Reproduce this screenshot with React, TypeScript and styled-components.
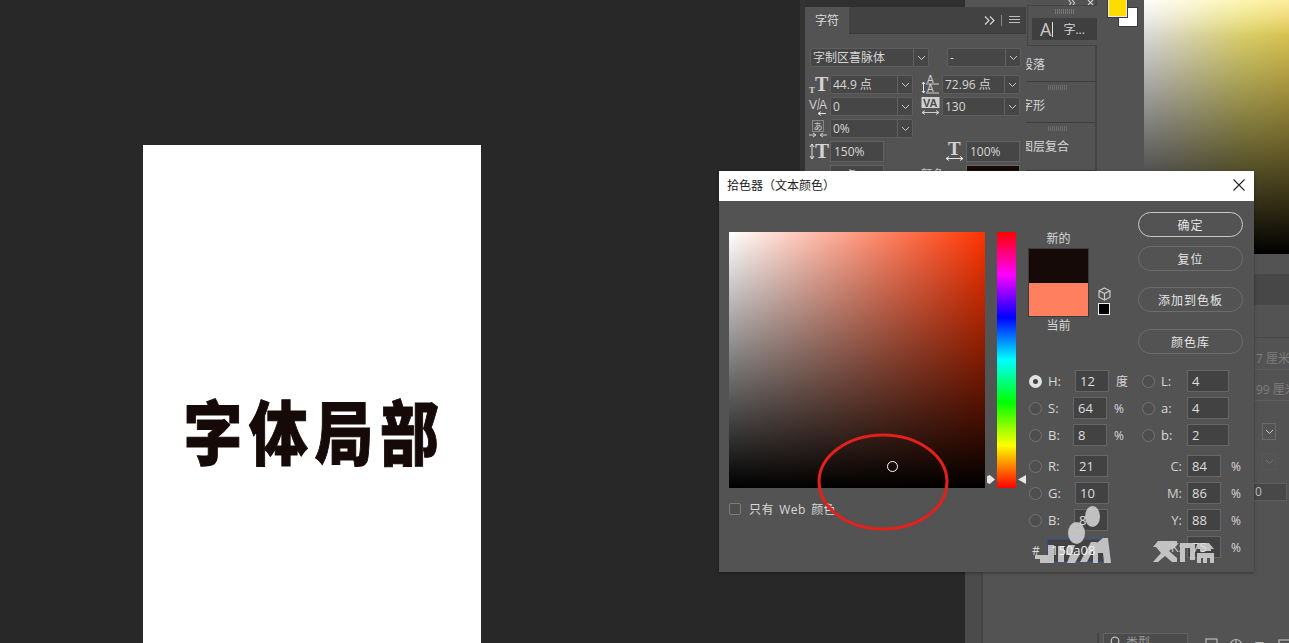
import React from 'react'
import styled, { createGlobalStyle } from 'styled-components'

const UI_FONT = `"Open Sans", "Noto Sans CJK SC", sans-serif`
const PANEL = '#535353'

const GlobalStyle = createGlobalStyle`
    html, body { margin: 0; padding: 0; background: #282828; overflow: hidden; }
    * { box-sizing: border-box; }
    body { font-family: ${UI_FONT}; }
`

const IconSvg = styled.svg`
    overflow: visible;
    flex: none;
`

const Chevron = () => (
    <svg width="9" height="6" viewBox="0 0 9 6" fill="none" stroke="#c8c8c8" strokeWidth="1">
        <path d="M1 1l3.5 3.5L8 1" />
    </svg>
)

const SizeIcon = () => (
    <IconSvg width="19" height="19" viewBox="0 0 19 19" fill="#d4d4d4">
        <text x="6" y="16" fontSize="20" fontWeight="700" fontFamily="Liberation Serif">T</text>
        <text x="0" y="18" fontSize="9" fontWeight="700" fontFamily="Liberation Serif">T</text>
    </IconSvg>
)

const LeadingIcon = () => (
    <IconSvg width="19" height="19" viewBox="0 0 19 19" fill="#cfcfcf">
        <text x="6" y="8" fontSize="10" fontFamily="Liberation Sans">A</text>
        <text x="6" y="17" fontSize="10" fontFamily="Liberation Sans">A</text>
        <path d="M5 9H18M5 18H18" stroke="#cfcfcf" strokeWidth="1" />
        <path d="M2.500 7v11M1 9l1.500-2L4 9M1 16l1.500 2L4 16" stroke="#e2e2e2" strokeWidth="1" fill="none" />
    </IconSvg>
)

const KerningIcon = () => (
    <IconSvg width="19" height="19" viewBox="0 0 19 19" fill="#cfcfcf">
        <text x="0" y="12" fontSize="12" fontFamily="Liberation Sans">V</text>
        <text x="10" y="12" fontSize="12" fontFamily="Liberation Sans">A</text>
        <path d="M8.500 13L10.500 1" stroke="#cfcfcf" strokeWidth="0.800" />
        <path d="M9 16.500h8M9 16.500l3-2M9 16.500l3 2" stroke="#e2e2e2" strokeWidth="1" fill="none" />
    </IconSvg>
)

const TrackingIcon = () => (
    <IconSvg width="19" height="19" viewBox="0 0 19 19">
        <rect x="0.500" y="0" width="18" height="11" fill="#d0d0d0" />
        <text x="2" y="10" fontSize="11" fontWeight="700" fontFamily="Liberation Sans" fill="#4a4a4a">VA</text>
        <path d="M1 15.500h17M1 15.500l3-2M1 15.500l3 2M18 15.500l-3-2M18 15.500l-3 2" stroke="#cfcfcf" strokeWidth="1" fill="none" />
    </IconSvg>
)

const TsumeIcon = () => (
    <IconSvg width="18" height="18" viewBox="0 0 18 18" fill="#cfcfcf">
        <rect x="3.500" y="0.500" width="11" height="11" fill="none" stroke="#bdbdbd" strokeWidth="1" strokeDasharray="1 1" />
        <text x="4.500" y="9.500" fontSize="9" fontFamily="Noto Sans CJK JP">あ</text>
        <path d="M0 15h7M4 13l3 2-3 2M18 15h-7M14 13l-3 2 3 2" stroke="#cfcfcf" strokeWidth="1" fill="none" />
    </IconSvg>
)

const VerticalScaleIcon = () => (
    <IconSvg width="19" height="17" viewBox="0 0 19 17" fill="#d4d4d4">
        <text x="6" y="15" fontSize="21" fontWeight="700" fontFamily="Liberation Serif">T</text>
        <path d="M3 1v15M1 4l2-3 2 3M1 13l2 3 2-3" stroke="#e2e2e2" strokeWidth="1" fill="none" />
    </IconSvg>
)

const HorizontalScaleIcon = () => (
    <IconSvg width="19" height="19" viewBox="0 0 19 19" fill="#d4d4d4">
        <text x="3" y="13" fontSize="19" fontWeight="700" fontFamily="Liberation Serif">T</text>
        <path d="M1 16.500h17M1 16.500l3-2M1 16.500l3 2M18 16.500l-3-2M18 16.500l-3 2" stroke="#e2e2e2" strokeWidth="1" fill="none" />
    </IconSvg>
)

const CubeIcon = () => (
    <svg width="13" height="14" viewBox="0 0 13 14" fill="none" stroke="#c9c9c9" strokeWidth="1.200">
        <path d="M6.500 1L12 3.800v6.400L6.500 13 1 10.200V3.800zM1 3.800l5.500 2.800L12 3.800M6.500 6.600V13" />
    </svg>
)

const MenuIcon = () => (
    <svg width="11" height="8" viewBox="0 0 11 8" stroke="#bdbdbd" strokeWidth="1">
        <path d="M0 .5h11M0 3.500h11M0 6.500h11" />
    </svg>
)

const ExpandIcon = () => (
    <svg width="11" height="9" viewBox="0 0 11 9" fill="none" stroke="#dcdcdc" strokeWidth="1.100">
        <path d="M1 .5l4 4-4 4M6 .5l4 4-4 4" />
    </svg>
)

const TopDockMarks = () => (
    <svg width="26" height="5" viewBox="0 0 26 5" fill="none" stroke="#cfcfcf" strokeWidth="1.100">
        <path d="M0-1l3 4-3 4M3.500-1l3 4-3 4M20 0l5 5M25 0l-5 5" />
    </svg>
)

const LayerFilterIcons = () => (
    <LayerIconStrip width="90" height="12" viewBox="0 0 90 12" fill="none" stroke="#b9b9b9" strokeWidth="1.200">
        <rect x="1" y="1" width="11" height="12" />
        <circle cx="31" cy="7" r="5.500" />
        <path d="M31 1.500v11" />
        <text x="50" y="12" fontSize="13" fontWeight="700" fontFamily="Liberation Serif" fill="#c4c4c4" stroke="none">T</text>
        <rect x="74" y="2" width="11" height="11" />
    </LayerIconStrip>
)

const Dropdown = ({ value, width }: { value: string, width: number }) => (
    <SelectBox $width={width}>
        <SelectValue>{value}</SelectValue>
        <SelectArrow><Chevron /></SelectArrow>
    </SelectBox>
)

const hsb = [
    { label: 'H:', value: '12', unit: '度', on: true, shift: 2 },
    { label: 'S:', value: '64', unit: '%', on: false, shift: 0 },
    { label: 'B:', value: '8', unit: '%', on: false, shift: 0 },
]
const rgb = [
    { label: 'R:', value: '21', shift: 1 },
    { label: 'G:', value: '10', shift: 2 },
    { label: 'B:', value: '8', shift: 1 },
]
const lab = [['L:', '4'], ['a:', '4'], ['b:', '2']]
const cmyk = [['C:', '84'], ['M:', '86'], ['Y:', '88'], ['K:', '75']]

const ColorDialog = () => (
    <Dialog>
        <TitleBar>
            <TitleText>拾色器（文本颜色）</TitleText>
            <svg width="12" height="12" viewBox="0 0 12 12" stroke="#222" strokeWidth="1.100">
                <path d="M.5.5l11 11M11.500.5l-11 11" />
            </svg>
        </TitleBar>
        <DialogBody>
            <PickerColumn>
                <PickerRow>
                    <ColorField>
                        <FieldCursor />
                    </ColorField>
                    <HueStrip>
                        <HueMarkerLeft />
                        <HueMarkerRight />
                    </HueStrip>
                </PickerRow>
                <WebOnly>
                    <CheckBox />
                    <span>只有 Web 颜色</span>
                </WebOnly>
            </PickerColumn>
            <SettingsColumn>
                <TopControls>
                    <SwatchColumn>
                        <SwatchLabel>新的</SwatchLabel>
                        <SwatchBox>
                            <SwatchPart $color="#150a08" />
                            <SwatchPart $color="#ff7f5f" />
                        </SwatchBox>
                        <SwatchLabel>当前</SwatchLabel>
                    </SwatchColumn>
                    <GamutColumn>
                        <CubeIcon />
                        <WebSwatch />
                    </GamutColumn>
                    <ButtonColumn>
                        <DialogButton $primary>确定</DialogButton>
                        <DialogButton $mt={9}>复位</DialogButton>
                        <DialogButton $mt={16}>添加到色板</DialogButton>
                        <DialogButton $mt={17}>颜色库</DialogButton>
                    </ButtonColumn>
                </TopControls>
                <ValueColumns>
                    <ValueColumn>
                        <ValueGroup>
                            {hsb.map(row => (
                                <ValueRow key={row.label}>
                                    <Radio $on={row.on} />
                                    <ValueLabel>{row.label}</ValueLabel>
                                    <Shifted $shift={row.shift}><NumberInput><OverMark>{row.value}</OverMark></NumberInput></Shifted>
                                    <Unit>{row.unit}</Unit>
                                </ValueRow>
                            ))}
                        </ValueGroup>
                        <ValueGroup>
                            {rgb.map(row => (
                                <ValueRow key={row.label}>
                                    <Radio />
                                    <ValueLabel>{row.label}</ValueLabel>
                                    <Shifted $shift={row.shift}><NumberInput><OverMark>{row.value}</OverMark></NumberInput></Shifted>
                                </ValueRow>
                            ))}
                            <HexRow>
                                <HexMark>#</HexMark>
                                <HexInput><OverMark>150a08</OverMark></HexInput>
                            </HexRow>
                        </ValueGroup>
                    </ValueColumn>
                    <ValueColumn>
                        <ValueGroup>
                            {lab.map(([label, value]) => (
                                <ValueRow key={label}>
                                    <Radio />
                                    <ValueLabel>{label}</ValueLabel>
                                    <LabInput>{value}</LabInput>
                                </ValueRow>
                            ))}
                        </ValueGroup>
                        <ValueGroup>
                            {cmyk.map(([label, value]) => (
                                <ValueRow key={label}>
                                    <CmykLabel><OverMark>{label}</OverMark></CmykLabel>
                                    <NumberInput><OverMark>{value}</OverMark></NumberInput>
                                    <CmykUnit>%</CmykUnit>
                                </ValueRow>
                            ))}
                        </ValueGroup>
                    </ValueColumn>
                </ValueColumns>
            </SettingsColumn>
        </DialogBody>
        <Annotation viewBox="0 0 134 100" fill="none">
            <ellipse cx="67" cy="50" rx="64" ry="47" stroke="#e3201b" strokeWidth="3" />
        </Annotation>
        <Watermark viewBox="0 0 190 70" fill="#d6d6d6">
            <ellipse cx="62.500" cy="11.500" rx="7.500" ry="10.500" />
            <ellipse cx="46.500" cy="28" rx="8.500" ry="11" />
            <path d="M5 50h13v-10h6v18H10v-4H5zM28 41h6v16h-6zM38 40h7l-3 9h8l-5 9h-8l3-8h-4zM50 57l11-20h6l-10 20zM63 41l10-8h5l3 25h-7l-1-10h-5v10h-5z" />
            <path d="M128 36h19v4l-8 6 8 7v4h-5l-7-6-7 6h-5l8-9-5-6h-3zM150 38h15v17h-5v-12h-5v14h-5zM168 38h11l5 6h-3v2h-11v-2h-3zM167 48h17v10h-4v-5h-3v5h-4v-5h-2v5h-4z" />
        </Watermark>
    </Dialog>
)

export default function App() {
    return (
        <>
            <GlobalStyle />
            <Page>
                <Canvas>
                    <Artboard>
                        <Headline>字体局部</Headline>
                    </Artboard>
                </Canvas>
                <Dock>
                    <DockTop>
                        <CharacterColumn>
                            <TopSliver><SliverPart /></TopSliver>
                            <PanelTabs>
                                <PanelTab>字符</PanelTab>
                                <TabTools>
                                    <ExpandIcon />
                                    <TabDivider />
                                    <MenuIcon />
                                </TabTools>
                            </PanelTabs>
                            <CharacterBody>
                                <FontRow>
                                    <Dropdown value="字制区喜脉体" width={119} />
                                    <Dropdown value="-" width={74} />
                                </FontRow>
                                <MetricRow>
                                    <MetricIcon><SizeIcon /></MetricIcon>
                                    <Dropdown value="44.9 点" width={83} />
                                    <MetricIcon $ml={8}><LeadingIcon /></MetricIcon>
                                    <Dropdown value="72.96 点" width={78} />
                                </MetricRow>
                                <MetricRow>
                                    <MetricIcon><KerningIcon /></MetricIcon>
                                    <Dropdown value="0" width={83} />
                                    <MetricIcon $ml={8}><TrackingIcon /></MetricIcon>
                                    <Dropdown value="130" width={78} />
                                </MetricRow>
                                <MetricRow>
                                    <MetricIcon><TsumeIcon /></MetricIcon>
                                    <Dropdown value="0%" width={83} />
                                </MetricRow>
                                <MetricRow>
                                    <MetricIcon><VerticalScaleIcon /></MetricIcon>
                                    <PlainInput>150%</PlainInput>
                                    <MetricIcon $ml={61}><HorizontalScaleIcon /></MetricIcon>
                                    <PlainInput>100%</PlainInput>
                                </MetricRow>
                                <MetricRow>
                                    <MetricIcon />
                                    <PlainInput>0 点</PlainInput>
                                    <ColorLabel>颜色:</ColorLabel>
                                    <TextColorBox />
                                </MetricRow>
                            </CharacterBody>
                        </CharacterColumn>
                        <CollapsedDock>
                            <CollapsedTop>
                                <TopDockMarks />
                            </CollapsedTop>
                            <CollapsedItem $height={35} $pad={9}>段落</CollapsedItem>
                            <CollapsedItem $height={41} $pad={15} $grip>字形</CollapsedItem>
                            <CollapsedItem $height={48} $pad={15} $grip>图层复合</CollapsedItem>
                            <FloatingPanel>
                                <Grip />
                                <FloatingTab>
                                    <FloatingGlyph>A</FloatingGlyph>
                                    <FloatingCaret />
                                    <span>字...</span>
                                </FloatingTab>
                            </FloatingPanel>
                        </CollapsedDock>
                        <ToolStrip>
                            <BackSwatch />
                            <FrontSwatch />
                        </ToolStrip>
                        <GradientPanel />
                    </DockTop>
                    <DockBottom>
                        <SideRail />
                        <PropertiesColumn>
                            <PropBand $height={21} />
                            <PropBand $height={30} $dark />
                            <PropBand $height={33} />
                            <PropText $mt={12}>7 厘米</PropText>
                            <PropText $mt={11}>99 厘米</PropText>
                            <PropSelect $mt={22}><Chevron /></PropSelect>
                            <PropSelect $mt={13} $dim><Chevron /></PropSelect>
                            <PropField>0</PropField>
                            <LayerSearchRow>
                                <LayerSearch>
                                    <svg width="11" height="11" viewBox="0 0 11 11" fill="none" stroke="#c0c0c0" strokeWidth="1.300">
                                        <circle cx="5" cy="5" r="3.800" />
                                        <path d="M8 8l3 3" />
                                    </svg>
                                    <span>类型</span>
                                </LayerSearch>
                                <LayerFilterIcons />
                            </LayerSearchRow>
                        </PropertiesColumn>
                    </DockBottom>
                </Dock>
                <ColorDialog />
            </Page>
        </>
    )
}

const Page = styled.div`
    position: relative;
    width: 1289px;
    height: 643px;
    display: flex;
    overflow: hidden;
    background: #282828;
`

const Canvas = styled.div`
    width: 800px;
    height: 643px;
    padding: 145px 0 0 143px;
`

const Artboard = styled.div`
    width: 338px;
    height: 498px;
    background: #fff;
    display: flex;
    justify-content: center;
    padding-top: 240px;
`

const Headline = styled.h1`
    margin: 0;
    padding-left: 6px;
    font-family: "Noto Sans CJK SC", sans-serif;
    font-size: 70px;
    line-height: 90px;
    height: 90px;
    font-weight: 900;
    letter-spacing: 8px;
    white-space: nowrap;
    color: #150a08;
    -webkit-text-stroke: 1px #150a08;
    transform: scaleX(.84);
`

const Dock = styled.div`
    width: 489px;
    height: 643px;
    display: flex;
    flex-direction: column;
`

const DockTop = styled.div`
    height: 254px;
    display: flex;
`

const CharacterColumn = styled.div`
    position: relative;
    z-index: 1;
    width: 226px;
    border-left: 5px solid #333;
    background: ${PANEL};
`

const TopSliver = styled.div`
    height: 7px;
    background: #303030;
    display: flex;
    justify-content: flex-end;
`

const SliverPart = styled.div`
    width: 61px;
    background: #555;
`

const PanelTabs = styled.div`
    height: 27px;
    background: #424242;
    border-bottom: 1px solid #3a3a3a;
    display: flex;
    justify-content: space-between;
    align-items: center;
`

const PanelTab = styled.div`
    width: 44px;
    height: 27px;
    background: ${PANEL};
    color: #dcdcdc;
    font-size: 12px;
    line-height: 27px;
    text-align: center;
`

const TabTools = styled.div`
    display: flex;
    align-items: center;
    padding-right: 6px;
`

const TabDivider = styled.span`
    width: 1px;
    height: 11px;
    background: #8a8a8a;
    margin: 0 7px 0 6px;
`

const CharacterBody = styled.div`
    padding: 14px 0 0 4px;
    display: flex;
    flex-direction: column;
    gap: 3px;
`

const FontRow = styled.div`
    display: flex;
    gap: 18px;
    margin: 0 0 5px 1px;
`

const MetricRow = styled.div`
    display: flex;
    align-items: stretch;
    min-height: 19px;
`

const MetricIcon = styled.div<{ $ml?: number }>`
    width: 21px;
    margin-left: ${props => props.$ml || 0}px;
    display: flex;
    align-items: center;
`

const SelectBox = styled.div<{ $width: number }>`
    width: ${props => props.$width}px;
    height: 19px;
    display: flex;
    background: #464646;
    border: 1px solid #5e5e5e;
    border-radius: 2px;
    font-size: 12px;
    color: #d6d6d6;
`

const SelectValue = styled.div`
    flex: 1;
    min-width: 0;
    padding-left: 2px;
    line-height: 17px;
    white-space: nowrap;
    overflow: hidden;
`

const SelectArrow = styled.div`
    width: 15px;
    border-left: 1px solid #626262;
    display: flex;
    align-items: center;
    justify-content: center;
`

const PlainInput = styled.div`
    width: 54px;
    height: 21px;
    background: #464646;
    border: 1px solid #626262;
    font-size: 12px;
    line-height: 19px;
    padding-left: 3px;
    color: #d6d6d6;
`

const ColorLabel = styled.div`
    width: 82px;
    text-align: right;
    padding-right: 18px;
    font-size: 12px;
    color: #c8c8c8;
`

const TextColorBox = styled.div`
    width: 54px;
    height: 21px;
    background: #150a08;
    border: 1px solid #666;
`

const CollapsedDock = styled.div`
    position: relative;
    width: 71px;
    background: ${PANEL};
    border-right: 2px solid #434343;
`

const CollapsedTop = styled.div`
    height: 47px;
    display: flex;
    justify-content: flex-end;
    padding-right: 1px;
`

const CollapsedItem = styled.div<{ $height: number, $pad: number, $grip?: boolean }>`
    position: relative;
    height: ${props => props.$height}px;
    border-bottom: 1px solid #3d3d3d;
    padding-top: ${props => props.$pad}px;
    text-indent: -5px;
    font-size: 12px;
    line-height: 17px;
    color: #d6d6d6;
    white-space: nowrap;
    &::before {
        content: "";
        display: ${props => props.$grip ? 'block' : 'none'};
        position: absolute;
        left: 22px;
        top: 3px;
        width: 20px;
        height: 5px;
        background: repeating-linear-gradient(90deg, #6e6e6e 0 1px, transparent 1px 2px);
    }
`

const FloatingPanel = styled.div`
    position: absolute;
    left: 1px;
    top: 5px;
    width: 75px;
    height: 41px;
    background: ${PANEL};
    border: 1px solid #444;
    padding: 3px 4px;
`

const Grip = styled.div`
    width: 20px;
    height: 5px;
    margin: 0 auto 4px;
    background: repeating-linear-gradient(90deg, #777 0 1px, transparent 1px 2px);
`

const FloatingTab = styled.div`
    height: 22px;
    background: #3f3f3f;
    display: flex;
    align-items: center;
    padding-left: 8px;
    font-size: 12px;
    color: #d6d6d6;
    span:last-child { margin-left: 10px; }
`

const FloatingGlyph = styled.span`
    font-size: 18px;
    line-height: 22px;
    color: #c8c8c8;
`

const FloatingCaret = styled.i`
    width: 1px;
    height: 15px;
    margin-left: 1px;
    background: #ddd;
`

const ToolStrip = styled.div`
    position: relative;
    width: 47px;
    background: ${PANEL};
`

const BackSwatch = styled.div`
    position: absolute;
    left: 21px;
    top: 7px;
    width: 20px;
    height: 20px;
    background: #fff;
    border: 1px solid #3a3a3a;
`

const FrontSwatch = styled.div`
    position: absolute;
    left: 11px;
    top: -3px;
    width: 19px;
    height: 20px;
    background: #ffdc00;
    border: 1px solid #e8e8e8;
    outline: 1px solid #3a3a3a;
`

const GradientPanel = styled.div`
    width: 145px;
    background:
        linear-gradient(180deg, rgba(255,255,255,.4) 0%, rgba(255,255,255,0) 14%),
        linear-gradient(180deg, rgba(0,0,0,.02) 0%, #000 100%),
        linear-gradient(90deg, #ffffff 0%, #fff27a 70%, #ffe460 100%);
`

const DockBottom = styled.div`
    flex: 1;
    margin-left: 165px;
    display: flex;
    background: ${PANEL};
`

const SideRail = styled.div`
    width: 18px;
    background: #4b4b4b;
    border-right: 2px solid #434343;
`

const PropertiesColumn = styled.div`
    flex: 1;
    min-width: 0;
    overflow: hidden;
    display: flex;
    flex-direction: column;
`

const PropBand = styled.div<{ $height: number, $dark?: boolean }>`
    height: ${props => props.$height}px;
    flex: none;
    background: ${props => props.$dark ? '#474747' : PANEL};
    border-bottom: 1px solid #484848;
`

const PropText = styled.div<{ $mt: number }>`
    margin-top: ${props => props.$mt}px;
    height: 20px;
    flex: none;
    border-bottom: 1px solid #5c5c5c;
    padding-left: 273px;
    font-size: 12px;
    line-height: 18px;
    white-space: nowrap;
    color: #7d7d7d;
`

const PropSelect = styled.div<{ $mt: number, $dim?: boolean }>`
    margin: ${props => props.$mt}px 0 0 279px;
    width: 14px;
    height: 17px;
    flex: none;
    border: 1px solid #6a6a6a;
    display: flex;
    align-items: center;
    justify-content: center;
    opacity: ${props => props.$dim ? .25 : 1};
`

const PropField = styled.div`
    margin: 13px 0 0 240px;
    width: 64px;
    height: 18px;
    flex: none;
    background: #484848;
    border: 1px solid #5e5e5e;
    border-left: 0;
    padding-left: 32px;
    font-size: 12px;
    line-height: 16px;
    color: #bbb;
`

const LayerSearchRow = styled.div`
    margin-top: auto;
    height: 10px;
    display: flex;
    gap: 17px;
    margin-left: 114px;
    border-left: 2px solid #444;
    padding-left: 4px;
    width: 210px;
`

const LayerSearch = styled.div`
    width: 85px;
    height: 14px;
    flex: none;
    padding: 2px 0 0 6px;
    border: 1px solid #636363;
    background: #4b4b4b;
    display: flex;
    align-items: flex-start;
    gap: 5px;
    font-size: 12px;
    line-height: 14px;
    color: #9a9a9a;
`

const LayerIconStrip = styled.svg`
    margin-top: 5px;
    flex: none;
    overflow: visible;
`

const Dialog = styled.section`
    position: absolute;
    z-index: 2;
    left: 719px;
    top: 171px;
    width: 535px;
    height: 401px;
    background: ${PANEL};
    box-shadow: 0 1px 3px rgba(0, 0, 0, .35);
`

const TitleBar = styled.header`
    height: 30px;
    background: #fff;
    display: flex;
    align-items: center;
    justify-content: space-between;
    padding: 0 9px 3px 8px;
`

const TitleText = styled.span`
    font-family: "Noto Sans CJK SC", sans-serif;
    font-size: 12px;
    color: #222;
`

const DialogBody = styled.div`
    display: flex;
    padding: 10px 0 0 10px;
    gap: 13px;
`

const PickerColumn = styled.div`
    padding-top: 21px;
`

const PickerRow = styled.div`
    display: flex;
    gap: 12px;
`

const ColorField = styled.div`
    position: relative;
    width: 256px;
    height: 256px;
    background:
        linear-gradient(180deg, transparent 0%, #000 100%),
        linear-gradient(90deg, #fff 0%, #ff3300 100%);
`

const FieldCursor = styled.span`
    position: absolute;
    left: 158px;
    top: 229px;
    width: 11px;
    height: 11px;
    border: 1px solid #fff;
    border-radius: 50%;
`

const HueStrip = styled.div`
    position: relative;
    width: 19px;
    height: 256px;
    background: linear-gradient(180deg, #ff0000 0%, #ff00ff 16.67%, #0000ff 33.33%, #00ffff 50%, #00ff00 66.67%, #ffff00 83.33%, #ff0000 100%);
`

const HueMarkerLeft = styled.i`
    position: absolute;
    left: -10px;
    top: 243px;
    width: 8px;
    height: 9px;
    background: #e6e6e6;
    clip-path: polygon(0 15%, 35% 0, 100% 50%, 35% 100%, 0 85%);
`

const HueMarkerRight = styled.i`
    position: absolute;
    right: -10px;
    top: 243px;
    width: 8px;
    height: 9px;
    background: #e6e6e6;
    clip-path: polygon(0 50%, 100% 0, 100% 100%);
`

const WebOnly = styled.label`
    display: flex;
    align-items: center;
    gap: 8px;
    margin-top: 12px;
    font-size: 12px;
    letter-spacing: .4px;
    word-spacing: 2px;
    color: #d8d8d8;
`

const CheckBox = styled.span`
    width: 12px;
    height: 12px;
    border: 1px solid #7c7c7c;
    border-radius: 2px;
    background: #4e4e4e;
`

const SettingsColumn = styled.div`
    width: 215px;
    display: flex;
    flex-direction: column;
`

const TopControls = styled.div`
    display: flex;
    height: 159px;
    margin-left: -1px;
`

const SwatchColumn = styled.div`
    width: 61px;
    padding-top: 19px;
    text-align: center;
`

const SwatchLabel = styled.div`
    font-size: 12px;
    line-height: 18px;
    color: #d8d8d8;
`

const SwatchBox = styled.div`
    height: 69px;
    border: 1px solid #3b3b3b;
    display: flex;
    flex-direction: column;
`

const SwatchPart = styled.div<{ $color: string }>`
    flex: 1;
    background: ${props => props.$color};
`

const GamutColumn = styled.div`
    width: 49px;
    padding: 76px 0 0 9px;
    display: flex;
    flex-direction: column;
    gap: 2px;
`

const WebSwatch = styled.span`
    width: 12px;
    height: 12px;
    background: #000;
    border: 1px solid #eee;
`

const ButtonColumn = styled.div`
    width: 105px;
    padding-top: 1px;
`

const DialogButton = styled.button<{ $primary?: boolean, $mt?: number }>`
    display: block;
    width: 105px;
    height: 25px;
    margin-top: ${props => props.$mt || 0}px;
    padding: 0;
    border-radius: 13px;
    background: transparent;
    border: ${props => props.$primary ? '1.5px solid #c9c9c9' : '1.5px solid #6c6c6c'};
    font-family: ${UI_FONT};
    font-size: 12px;
    letter-spacing: 1px;
    color: #e4e4e4;
`

const ValueColumns = styled.div`
    display: flex;
`

const ValueColumn = styled.div`
    width: 113px;
    flex: none;
    display: flex;
    flex-direction: column;
    gap: 9px;
`

const ValueGroup = styled.div`
    display: flex;
    flex-direction: column;
    gap: 5px;
`

const ValueRow = styled.div`
    display: flex;
    align-items: center;
    height: 22px;
    font-size: 13px;
    color: #d8d8d8;
`

const Radio = styled.span<{ $on?: boolean }>`
    width: 13px;
    height: 13px;
    flex: none;
    border-radius: 50%;
    border: ${props => props.$on ? '4px solid #e2e2e2' : '1px solid #757575'};
    background: ${props => props.$on ? '#444' : '#4e4e4e'};
`

const ValueLabel = styled.span`
    width: 31px;
    padding-left: 6px;
    flex: none;
`

const Shifted = styled.span<{ $shift: number }>`
    padding-left: ${props => props.$shift}px;
    display: flex;
`

const NumberInput = styled.span`
    display: block;
    width: 34px;
    height: 22px;
    flex: none;
    background: #424242;
    border: 1px solid #666;
    padding-left: 4px;
    font-size: 13px;
    line-height: 20px;
    color: #dedede;
`

const OverMark = styled.span`
    position: relative;
    z-index: 2;
`

const Unit = styled.span`
    margin-left: 7px;
    font-size: 12px;
`

const LabInput = styled(NumberInput)`
    width: 42px;
    margin-left: 1px;
`

const CmykLabel = styled.span`
    width: 45px;
    padding-right: 5px;
    text-align: right;
    flex: none;
    color: #cfcfcf;
`

const CmykUnit = styled.span`
    margin-left: 10px;
    font-size: 12px;
`

const HexRow = styled.div`
    display: flex;
    align-items: center;
    height: 23px;
    margin-top: 3px;
`

const HexMark = styled.span`
    width: 18px;
    padding-left: 3px;
    font-size: 12px;
    color: #d8d8d8;
`

const HexInput = styled.span`
    width: 62px;
    height: 23px;
    background: #424242;
    border: 1px solid #2b4f90;
    padding-left: 3px;
    font-size: 13px;
    line-height: 21px;
    color: #f2f2f2;
`

const Annotation = styled.svg`
    position: absolute;
    left: 97px;
    top: 261px;
    width: 134px;
    height: 100px;
    pointer-events: none;
`

const Watermark = styled.svg`
    position: absolute;
    z-index: 1;
    left: 311px;
    top: 334px;
    width: 190px;
    height: 70px;
    opacity: .85;
    pointer-events: none;
`
